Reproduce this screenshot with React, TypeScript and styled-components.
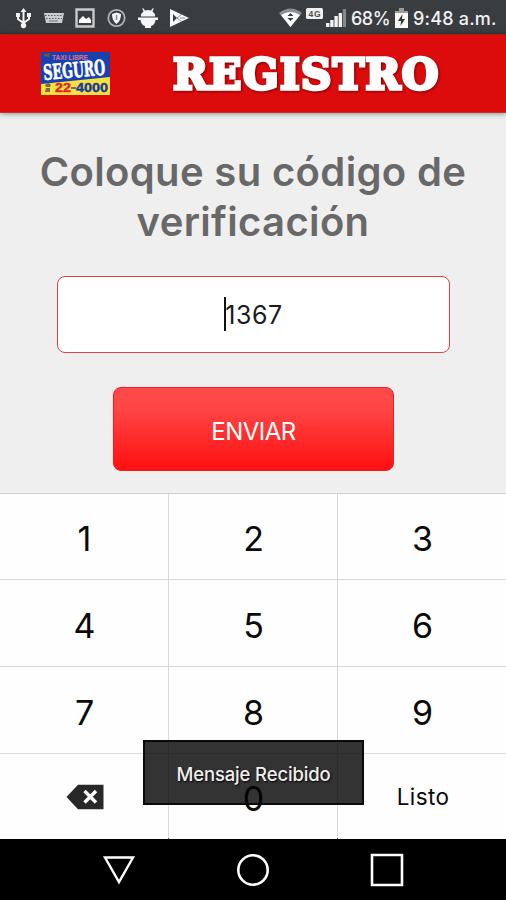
import React from 'react';
import styled, { createGlobalStyle } from 'styled-components';

const GlobalStyle = createGlobalStyle`
  * { box-sizing: border-box; }
  body { margin: 0; background: #efefef; }
`;

const Screen = styled.div`
  position: relative;
  display: flex;
  flex-direction: column;
  width: 506px;
  height: 900px;
  overflow: hidden;
  background: #efefef;
  font-family: Inter, Roboto, sans-serif;
`;

const StatusBar = styled.div`
  display: flex;
  flex: none;
  justify-content: space-between;
  height: 34px;
  padding: 0 9px 0 15px;
  background: #393d40;
  border-bottom: 1px solid #213c3b;
`;

const StatusGroup = styled.div`
  display: flex;
  align-items: center;
  height: 35px;
  color: #f2f3f3;
`;

const StatusIcon = styled.svg<{ $gap?: number }>`
  flex: none;
  margin-right: ${(p) => p.$gap ?? 0}px;
`;

const StatusText = styled.span<{ $width: number; $spacing: number; $gap?: number }>`
  width: ${(p) => p.$width}px;
  margin-right: ${(p) => p.$gap ?? 0}px;
  padding-top: 2px;
  font-size: 18px;
  font-weight: 500;
  line-height: 22px;
  white-space: nowrap;
  letter-spacing: ${(p) => p.$spacing}px;
`;

const Header = styled.header`
  display: flex;
  flex: none;
  align-items: center;
  height: 79px;
  padding-left: 41px;
  background: #dc0b0c;
  border-top: 1px solid #b41c1a;
  border-bottom: 1px solid #bd3634;
  box-shadow: 0 1px 5px rgba(0, 0, 0, 0.4);
`;

const Title = styled.h1`
  margin: 2px 0 0 63px;
  font-family: 'DejaVu Serif', serif;
  font-size: 42px;
  font-weight: 700;
  line-height: 50px;
  letter-spacing: 1.4px;
  color: #fff;
  -webkit-text-stroke: 3.4px #fff;
  paint-order: stroke fill;
  filter: drop-shadow(1px 1px 1px rgba(90, 0, 0, 0.75));
`;

const Form = styled.main`
  display: flex;
  flex: none;
  flex-direction: column;
  align-items: center;
  height: 380px;
  padding-top: 34px;
`;

const Prompt = styled.h2`
  width: 490px;
  margin: 0;
  font-size: 40px;
  font-weight: 600;
  line-height: 50px;
  letter-spacing: 0.35px;
  text-align: center;
  color: #686868;
`;

const CodeField = styled.div`
  display: flex;
  align-items: center;
  justify-content: center;
  width: 393px;
  height: 77px;
  margin: 29px 0 0 1px;
  border: 1px solid #d94340;
  border-radius: 8px;
  background: #fff;
  color: #1b1b1b;
  font-size: 25px;
  letter-spacing: 0.5px;
`;

const Caret = styled.span`
  width: 2px;
  height: 34px;
  margin: -2px -1px 0 0;
  background: #111;
`;

const Submit = styled.button`
  width: 281px;
  height: 84px;
  margin: 34px 0 0 1px;
  padding: 4px 0 0;
  border: 1px solid #f01c1c;
  border-radius: 8px;
  background: linear-gradient(#ff4b4b, #ff4545 25%, #ff1010);
  color: #fff;
  font-family: Inter, sans-serif;
  font-size: 24px;
  letter-spacing: -0.5px;
`;

const Keypad = styled.div`
  display: grid;
  flex: none;
  grid-template-columns: 168px 168px 168px;
  grid-template-rows: 85px 86px 86px 85px;
  gap: 1px;
  width: 506px;
  height: 346px;
  background: #d9d9d9;
  border-top: 1px solid #cfcfcf;
  border-bottom: 1px solid #555;
`;

const Key = styled.button<{ $label?: boolean }>`
  display: flex;
  align-items: center;
  justify-content: center;
  margin: 0;
  padding: ${(p) => (p.$label ? '0 0 0 2px' : '4px 0 0 1px')};
  border: 0;
  background: #fefefe;
  color: #0a0a0a;
  font-family: Inter, sans-serif;
  font-size: ${(p) => (p.$label ? 22.5 : 34)}px;
  letter-spacing: ${(p) => (p.$label ? 0.4 : 0)}px;
`;

const NavBar = styled.nav`
  display: flex;
  flex: 1;
  align-items: center;
  justify-content: center;
  gap: 100px;
  background: #000;
`;

const Toast = styled.div`
  position: absolute;
  top: 740px;
  left: 143px;
  display: flex;
  align-items: center;
  justify-content: center;
  width: 221px;
  height: 65px;
  padding-top: 2px;
  border: 2px solid rgba(0, 0, 0, 0.8);
  background: rgba(0, 0, 0, 0.8);
  color: #f0f0f0;
  font-size: 18.5px;
  font-weight: 500;
  letter-spacing: -0.15px;
  text-shadow: 1px 1px 2px #000;
`;

const Logo = () => (
  <svg width="69" height="43" viewBox="0 0 69 43">
    <rect width="69" height="43" fill="#f7e13f" />
    <path d="M0 0H69V25L0 32Z" fill="#1741ae" />
    <path d="M3 2L9 1L8 5L3 4Z" fill="#7c5130" />
    <text x="11" y="8" fontFamily="Liberation Sans" fontSize="8" fontWeight="700" fill="#e06d93" textLength="36" lengthAdjust="spacingAndGlyphs">TAXI LIBRE</text>
    <text transform="translate(3 28) rotate(-5)" fontFamily="DejaVu Serif" fontSize="21" fontWeight="700" fill="#fff" stroke="#fff" strokeWidth=".7" textLength="62" lengthAdjust="spacingAndGlyphs">SEGURO</text>
    <path d="M4 33Q7 29 10 33L9 35H5ZM5 36H9V40H4Z" fill="#786f45" />
    <text x="14" y="40" fontFamily="Liberation Sans" fontSize="12.5" fontWeight="700" fill="#e3232c" stroke="#e3232c" strokeWidth=".4" textLength="16" lengthAdjust="spacingAndGlyphs">22</text>
    <path d="M30 36H35" stroke="#666d92" strokeWidth="2" />
    <text x="35" y="40" fontFamily="Liberation Sans" fontSize="12.5" fontWeight="700" fill="#173a9b" stroke="#173a9b" strokeWidth=".4" textLength="32" lengthAdjust="spacingAndGlyphs">4000</text>
  </svg>
);

const LeftStatus = () => (
  <StatusGroup>
    <StatusIcon $gap={12} width="17" height="22" viewBox="0 0 17 22" fill="none" stroke="#f2f2f2" strokeWidth="2">
      <path d="M8.5 4V19M3 8V12L8.5 16L14 12V8" />
      <path d="M5.5 5L8.5 1L11.5 5ZM1 6H5V10H1ZM12 6H16V10H12Z" fill="#f2f2f2" stroke="none" />
      <circle cx="8.5" cy="18.5" r="2.7" fill="#f2f2f2" stroke="none" />
    </StatusIcon>
    <StatusIcon $gap={11} width="20" height="12" viewBox="0 0 20 12">
      <path d="M0 1H20L18 11H2Z" fill="#cbcdce" />
      <path d="M1 3.5H19M2 6.5H18" stroke="#55595b" strokeDasharray="1.5 1.5" />
      <path d="M5 9H14" stroke="#777" />
    </StatusIcon>
    <StatusIcon $gap={12} width="20" height="20" viewBox="0 0 20 20">
      <path d="M1.5 1.5H18.5V18.5H1.5Z" fill="none" stroke="#c8c9ca" strokeWidth="2.4" />
      <path d="M4 15V12L8 8L11 11L14 9L16 12V15Z" fill="#fff" />
    </StatusIcon>
    <StatusIcon $gap={12} width="19" height="20" viewBox="0 0 19 20">
      <circle cx="9.5" cy="10" r="8.2" fill="none" stroke="#b1b4b5" strokeWidth="1.8" />
      <path d="M9.5 4.5L14 6Q14 13 9.5 16Q5 13 5 6Z" fill="#f5f5f5" />
      <path d="M9.5 7V12" stroke="#888c8e" strokeWidth="1.5" />
    </StatusIcon>
    <StatusIcon $gap={11} width="20" height="22" viewBox="0 0 20 22" fill="#f6f6f6">
      <path d="M5 1L7 3.500Q10 2.500 13 3.500L15 1L15.700 1.500L14.500 4.500Q17 6 17 9.500H3Q3 6 5.500 4.500L4.300 1.500Z" />
      <path d="M0 10.500H20V13H17.500Q17 18 13 19V21H7V19Q3 18 2.500 13H0Z" />
    </StatusIcon>
    <StatusIcon width="20" height="20" viewBox="0 0 20 20">
      <path d="M1 1L20 10L1 19Z" fill="#fafafa" />
      <path d="M4 6L8 10L4 14Z" fill="#393d40" />
      <path d="M8 10L13 6M8 10L13 14M11 10H16" stroke="#888b8d" strokeWidth="1" />
    </StatusIcon>
  </StatusGroup>
);

const RightStatus = () => (
  <StatusGroup>
    <StatusIcon $gap={4} width="23" height="20" viewBox="0 0 23 20">
      <path d="M0 5Q11.500 -4 23 5L11.500 19Z" fill="#8c8f91" />
      <path d="M2 7Q11.500 1 21 7L11.500 19Z" fill="#fff" />
      <path d="M8.500 8L11.500 5L14.500 8ZM8.500 10H14.500L11.500 13Z" fill="#393d40" />
    </StatusIcon>
    <StatusIcon $gap={3} width="17" height="22" viewBox="0 0 17 22">
      <rect y="1" width="17" height="11" rx="1.5" fill="#f1f1f1" />
      <text x="2.500" y="9.500" fontFamily="Liberation Sans" fontSize="8.500" fontWeight="700" fill="#4b4f51" textLength="12">4G</text>
    </StatusIcon>
    <StatusIcon $gap={5} width="20" height="20" viewBox="0 0 20 20" fill="#f3f3f3">
      <path d="M0 15H3.400V19H0ZM4.200 12H7.600V19H4.200ZM8.400 8H11.800V19H8.400ZM12.600 5H16V19H12.600Z" />
      <path d="M16.800 1H20V19H16.800Z" fill="#85898b" />
    </StatusIcon>
    <StatusText $width={39} $spacing={-0.5} $gap={5}>68%</StatusText>
    <StatusIcon $gap={5} width="13" height="20" viewBox="0 0 13 20">
      <path d="M4 0H9V3H13V7H0V3H4Z" fill="#9b9d9e" />
      <path d="M0 5H13V20H0Z" fill="#fafafa" />
      <path d="M7.500 6L3 13H6L5.500 18L10 11H7Z" fill="#34383b" />
    </StatusIcon>
    <StatusText $width={84} $spacing={0.2}>9:48 a.m.</StatusText>
  </StatusGroup>
);

const Backspace = () => (
  <svg width="38" height="26" viewBox="0 0 38 26">
    <path d="M0.500 13L12 .8H37.500V25.200H12Z" fill="#282828" />
    <path d="M18.500 7L30 18.500M30 7L18.500 18.500" stroke="#fff" strokeWidth="3.400" />
  </svg>
);

export default function App() {
  return (
    <Screen>
      <GlobalStyle />
      <StatusBar>
        <LeftStatus />
        <RightStatus />
      </StatusBar>
      <Header>
        <Logo />
        <Title>REGISTRO</Title>
      </Header>
      <Form>
        <Prompt>Coloque su código de verificación</Prompt>
        <CodeField>
          <Caret />
          1367
        </CodeField>
        <Submit>ENVIAR</Submit>
      </Form>
      <Keypad>
        {['1', '2', '3', '4', '5', '6', '7', '8', '9'].map((n) => (
          <Key key={n}>{n}</Key>
        ))}
        <Key $label aria-label="Borrar">
          <Backspace />
        </Key>
        <Key>0</Key>
        <Key $label>Listo</Key>
      </Keypad>
      <NavBar>
        <svg width="34" height="34" viewBox="0 0 34 34" fill="none" stroke="#fff" strokeWidth="2.400">
          <path d="M3 4.500H31L17 29Z" />
        </svg>
        <svg width="34" height="34" viewBox="0 0 34 34" fill="none" stroke="#fff" strokeWidth="2.600">
          <circle cx="17" cy="17" r="14.700" />
        </svg>
        <svg width="34" height="34" viewBox="0 0 34 34" fill="none" stroke="#fff" strokeWidth="2.600">
          <path d="M2 2H32V32H2Z" />
        </svg>
      </NavBar>
      <Toast>Mensaje Recibido</Toast>
    </Screen>
  );
}
